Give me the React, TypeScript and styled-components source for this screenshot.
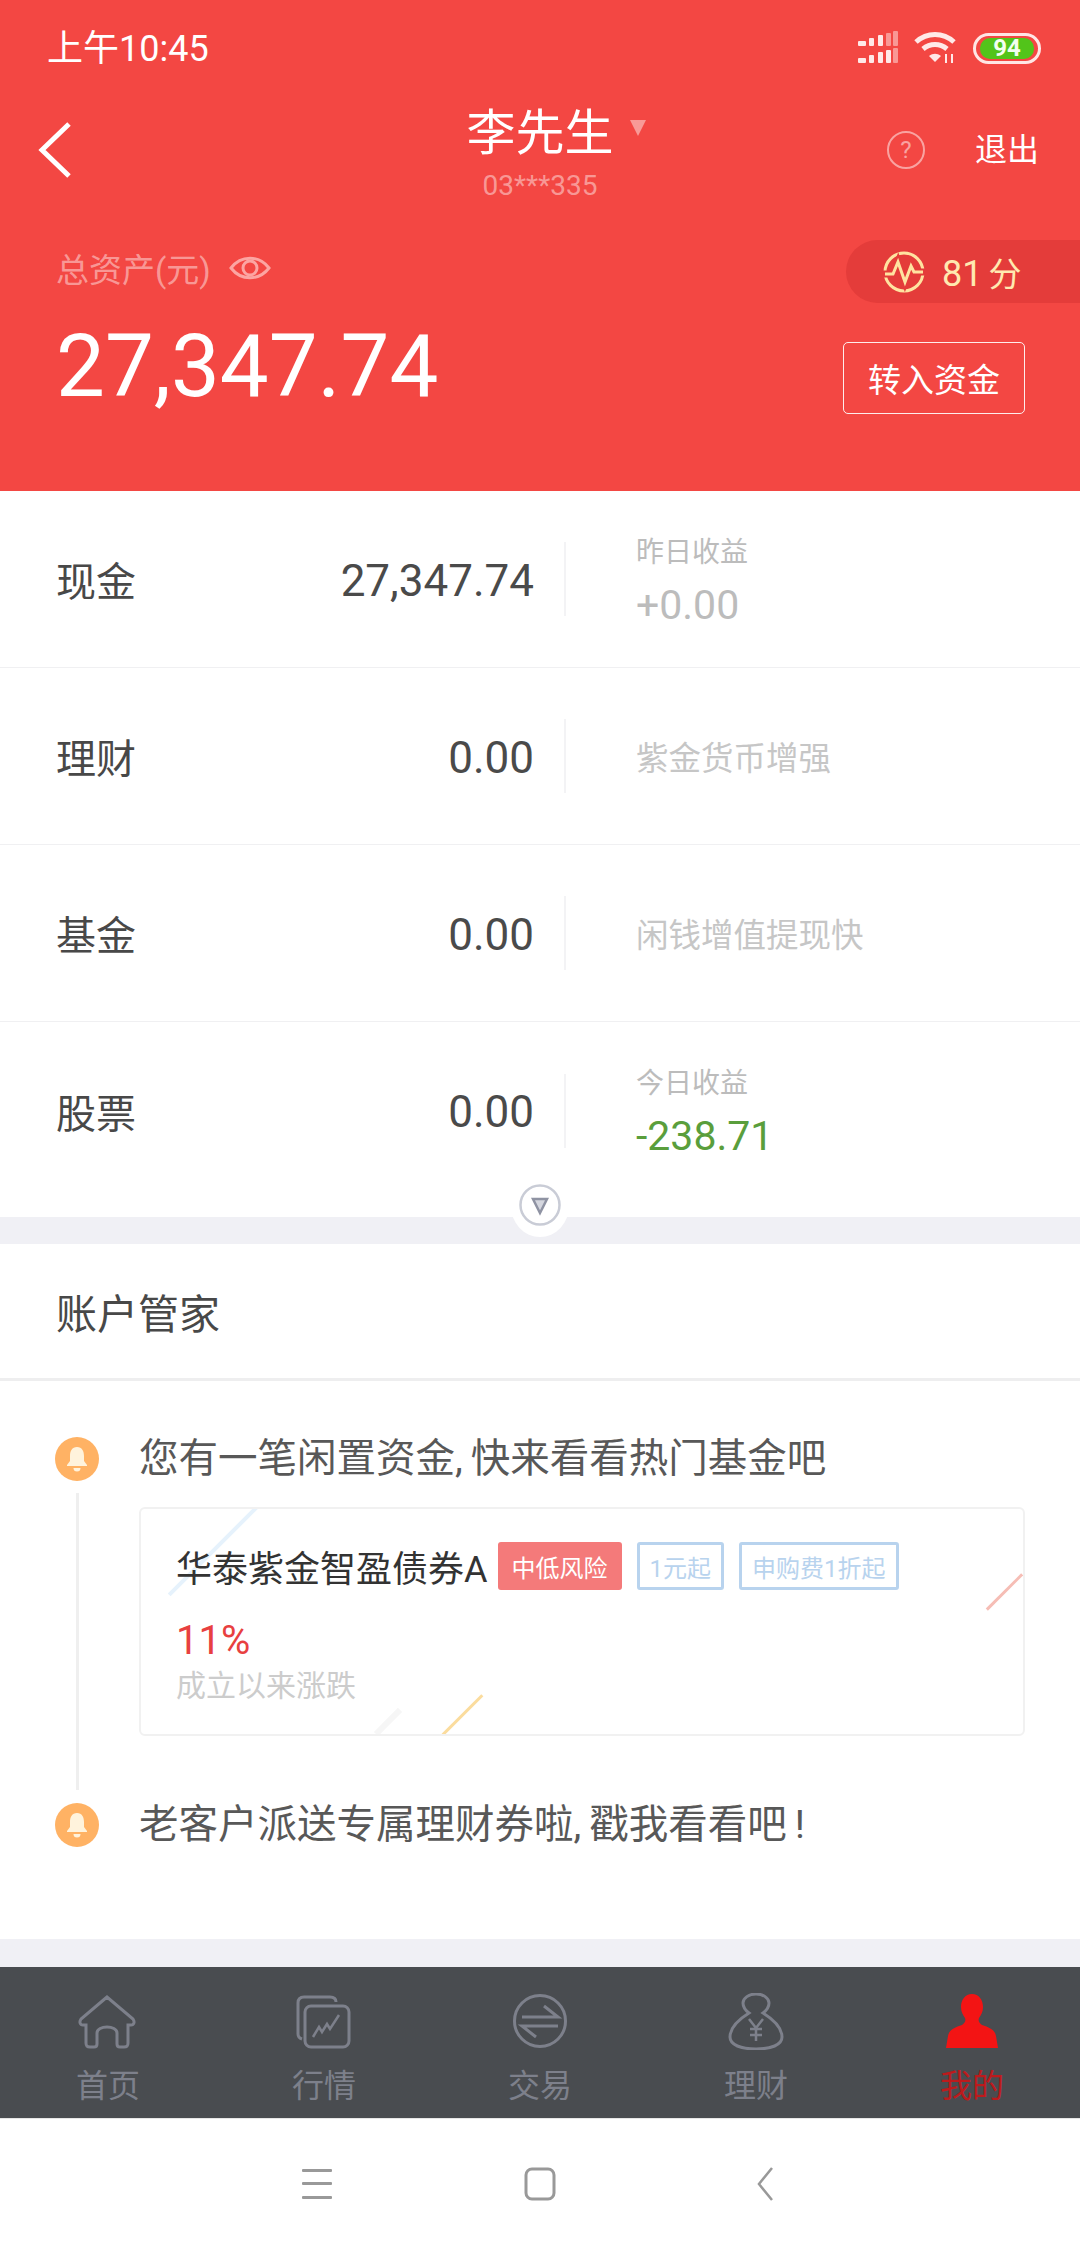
import React from 'react';
import styled, { createGlobalStyle } from 'styled-components';

const GlobalStyle = createGlobalStyle`
  html, body { margin: 0; padding: 0; background: #fff; }
  * { box-sizing: border-box; }
  body { font-family: Roboto, "Noto Sans CJK SC", sans-serif; }
`;

const Page = styled.div`
  width: 1080px;
  height: 2248px;
  display: flex;
  flex-direction: column;
  overflow: hidden;
  background: #fff;
`;

// Red header
const Header = styled.header`
  height: 491px;
  flex: none;
  background: #f34743;
  color: #fff;
`;

const StatusBar = styled.div`
  height: 98px;
  padding: 0 39px 0 47px;
  display: flex;
  align-items: center;
  justify-content: space-between;
`;

const StatusTime = styled.span`
  font-size: 36px;
  line-height: 98px;
`;

const StatusIcons = styled.div`
  display: flex;
  align-items: center;
  margin-top: -2px;
`;

const Battery = styled.div`
  width: 68px;
  height: 31px;
  margin-left: 15px;
  padding: 2px;
  border: 3px solid #ffe6e5;
  border-radius: 16px;
  display: flex;
`;

const BatteryFill = styled.div`
  flex: 1;
  margin: 0 2px;
  border-radius: 10px;
  background: #52c41a;
  font-size: 24px;
  line-height: 21px;
  font-weight: 700;
  text-align: center;
  color: #f2fff0;
`;

const TitleRow = styled.div`
  height: 104px;
  padding: 0 41px 0 37px;
  display: grid;
  grid-template-columns: 1fr auto 1fr;
  align-items: center;
`;

const NameBlock = styled.div`
  display: flex;
  flex-direction: column;
  align-items: center;
  position: relative;
  left: 2px;
  top: 5px;
`;

const Name = styled.div`
  font-size: 49px;
  line-height: 60px;
`;

const Caret = styled.span`
  position: absolute;
  left: 164px;
  top: 16px;
  width: 0;
  height: 0;
  border-left: 8px solid transparent;
  border-right: 8px solid transparent;
  border-top: 16px solid rgba(255, 255, 255, 0.45);
`;

const SubName = styled.div`
  margin-top: 2px;
  font-size: 28px;
  line-height: 40px;
  color: rgba(255, 255, 255, 0.45);
`;

const TitleActions = styled.div`
  display: flex;
  align-items: center;
  justify-content: flex-end;
  gap: 50px;
`;

const HelpCircle = styled.span`
  width: 38px;
  height: 38px;
  border: 2px solid rgba(255, 255, 255, 0.5);
  border-radius: 50%;
  display: flex;
  align-items: center;
  justify-content: center;
  font-size: 24px;
  color: rgba(255, 255, 255, 0.5);
`;

const Logout = styled.span`
  font-size: 32px;
  line-height: 44px;
`;

const AssetSection = styled.div`
  padding: 38px 0 0 56px;
  display: flex;
  justify-content: space-between;
`;

const AssetLabelRow = styled.div`
  height: 63px;
  padding-bottom: 8px;
  display: flex;
  align-items: center;
  gap: 18px;
  font-size: 33px;
  color: rgba(255, 255, 255, 0.45);
`;

const AssetAmount = styled.div`
  margin-top: 13px;
  font-size: 87px;
  line-height: 100px;
`;

const AssetSide = styled.div`
  display: flex;
  flex-direction: column;
  align-items: flex-end;
`;

const ScorePill = styled.div`
  width: 234px;
  height: 63px;
  padding-left: 36px;
  border-radius: 32px 0 0 32px;
  background: #e43c3a;
  display: flex;
  align-items: center;
  gap: 16px;
  font-size: 36px;
  color: #ffe9b0;
`;

const ScoreUnit = styled.span`
  margin-left: 6px;
  font-size: 33px;
`;

const TransferButton = styled.div`
  width: 182px;
  height: 72px;
  margin: 39px 55px 0 0;
  border: 1.5px solid rgba(255, 255, 255, 0.9);
  border-radius: 5px;
  display: flex;
  align-items: center;
  justify-content: center;
  font-size: 33px;
`;

// Holdings table
const HoldingRow = styled.div<{ $last?: boolean }>`
  height: ${p => (p.$last ? 195 : 177)}px;
  padding: 0 0 ${p => (p.$last ? 18 : 0)}px 56px;
  flex: none;
  display: flex;
  align-items: center;
  border-bottom: ${p => (p.$last ? 'none' : '1px solid #f0f0f2')};
`;

const HoldingLabel = styled.span`
  font-size: 40px;
  color: #484848;
`;

const HoldingValue = styled.span`
  margin-left: auto;
  width: 340px;
  padding-top: 3px;
  text-align: right;
  font-size: 44px;
  color: #4a4a4a;
`;

const RowDivider = styled.span`
  width: 2px;
  height: 74px;
  margin: 0 70px 0 30px;
  background: #f3f3f5;
`;

const RowAside = styled.div`
  width: 444px;
  padding-top: 6px;
  display: flex;
  flex-direction: column;
`;

const AsideCaption = styled.span`
  font-size: 28px;
  line-height: 40px;
  color: #bcbcbc;
`;

const AsideFigure = styled.span<{ $tone?: string }>`
  margin-top: 5px;
  font-size: 41px;
  line-height: 54px;
  color: ${p => p.$tone || '#bcbcbc'};
`;

const AsideHint = styled.span`
  margin-top: -7px;
  font-size: 32.500px;
  color: #c6c6c6;
`;

const Band = styled.div<{ $h: number }>`
  height: ${p => p.$h}px;
  flex: none;
  background: #f0f0f5;
  position: relative;
`;

const ExpandHandle = styled.div`
  position: absolute;
  left: 511px;
  top: -42px;
  width: 58px;
  height: 62px;
  padding-bottom: 2px;
  border-radius: 50%;
  background: #fff;
  display: flex;
  align-items: center;
  justify-content: center;
`;

// Account steward
const SectionTitle = styled.div`
  height: 137px;
  flex: none;
  padding-left: 56px;
  display: flex;
  align-items: center;
  border-bottom: 3px solid #eeeeef;
  font-size: 41px;
  color: #484848;
`;

const Timeline = styled.div`
  flex: 1;
  padding: 56px 55px 0 55px;
`;

const TimelineItem = styled.div`
  display: grid;
  grid-template-columns: 44px 1fr;
  column-gap: 40px;
`;

const Rail = styled.div`
  display: flex;
  flex-direction: column;
  align-items: center;
`;

const Connector = styled.span`
  flex: 1;
  width: 3px;
  margin: 12px 0 13px;
  background: #efefef;
`;

const AlertText = styled.div`
  font-size: 39.500px;
  line-height: 44px;
  color: #585858;
  white-space: nowrap;
`;

const Pause = styled.span<{ $before?: boolean }>`
  margin: ${p => (p.$before ? '0 0 0 8px' : '0 8px 0 0')};
`;

const FundCard = styled.div`
  height: 229px;
  margin: 26px 0 67px;
  padding: 33px 0 0 35px;
  border: 2px solid #f1f1f1;
  border-radius: 6px;
  position: relative;
  overflow: hidden;
`;

const Streak = styled.span<{ $x: number; $y: number; $len: number; $color: string; $w?: number }>`
  position: absolute;
  left: ${p => p.$x}px;
  top: ${p => p.$y}px;
  width: ${p => p.$w || 3}px;
  height: ${p => p.$len}px;
  background: ${p => p.$color};
  transform: rotate(45deg);
`;

const FundHead = styled.div`
  position: relative;
  height: 48px;
  display: flex;
  align-items: center;
`;

const FundName = styled.span`
  font-size: 36px;
  color: #333;
  margin-right: 10px;
`;

const Tag = styled.span<{ $solid?: boolean }>`
  height: 48px;
  padding: 0 ${p => (p.$solid ? 11 : 10)}px;
  margin-right: 15px;
  border-radius: 3px;
  border: 3px solid ${p => (p.$solid ? '#f47a7a' : '#b8d3ee')};
  background: ${p => (p.$solid ? '#f47a7a' : 'transparent')};
  color: ${p => (p.$solid ? '#fff' : '#b8d3ee')};
  font-size: 24px;
  display: flex;
  align-items: center;
`;

const FundRate = styled.div`
  position: relative;
  margin-top: 29px;
  font-size: 40px;
  line-height: 44px;
  color: #e84040;
`;

const FundNote = styled.div`
  position: relative;
  margin-top: 3px;
  font-size: 30px;
  line-height: 40px;
  color: #ccc;
`;

// Bottom tabs
const TabBar = styled.nav`
  height: 151px;
  flex: none;
  display: grid;
  grid-template-columns: repeat(5, 216px);
  background: #494c50;
`;

const Tab = styled.div<{ $active?: boolean }>`
  padding-top: 26px;
  display: flex;
  flex-direction: column;
  align-items: center;
  font-size: 32px;
  line-height: 40px;
  color: ${p => (p.$active ? '#bd1a1c' : '#7d808b')};
`;

const TabLabel = styled.span`
  margin-top: 16px;
`;

const SystemNav = styled.div`
  height: 130px;
  flex: none;
  display: grid;
  grid-template-columns: repeat(3, 226px);
  justify-content: center;
  align-items: center;
  justify-items: center;
  border-top: 1px solid #e6e6e6;
  background: #fff;
`;

const ink = '#7d808b';

const BellIcon = () => (
  <svg width="44" height="44" viewBox="0 0 44 44" style={{ flex: 'none' }}>
    <circle cx="22" cy="22" r="22" fill="#ffb264" />
    <path d="M22 10c-5 0-7 4-7 9v5l-3 4v1h20v-1l-3-4v-5c0-5-2-9-7-9z" fill="#fff3dc" />
    <path d="M18.500 31a3.500 3.500 0 0 0 7 0z" fill="#fff3dc" />
  </svg>
);

export default function App() {
  return (
    <Page>
      <GlobalStyle />
      <Header>
        <StatusBar>
          <StatusTime>上午10:45</StatusTime>
          <StatusIcons>
            <svg width="44" height="34" viewBox="0 0 44 34" fill="#ffe9e8">
              <rect x="0" y="10" width="8" height="5" rx="1" />
              <rect x="11" y="7" width="5" height="8" rx="1" />
              <rect x="20" y="4" width="5" height="11" rx="1" />
              <rect x="28" y="2" width="5" height="13" rx="1" opacity=".5" />
              <rect x="35" y="0" width="5" height="15" rx="1" opacity=".5" />
              <rect x="0" y="27" width="8" height="5" rx="1" />
              <rect x="11" y="24" width="5" height="8" rx="1" />
              <rect x="20" y="21" width="5" height="11" rx="1" />
              <rect x="28" y="19" width="5" height="13" rx="1" />
              <rect x="35" y="17" width="5" height="15" rx="1" opacity=".5" />
            </svg>
            <svg width="44" height="34" viewBox="0 0 44 34" fill="none" style={{ marginLeft: 12 }}>
              <g stroke="#ffe9e8" strokeWidth="5">
                <path d="M2 11C13 1 29 1 40 11" />
                <path d="M9 18c7-6 17-6 24 0" />
              </g>
              <path d="M15 25c4-3 8-3 12 0l-6 6z" fill="#ffe9e8" />
              <path d="M32 23v9M38 23v9" stroke="#ffe9e8" strokeWidth="2" />
            </svg>
            <Battery>
              <BatteryFill>94</BatteryFill>
            </Battery>
          </StatusIcons>
        </StatusBar>

        <TitleRow>
          <svg width="36" height="58" viewBox="0 0 36 58" fill="none">
            <path d="M32 3L5 29l27 26" stroke="#fff" strokeWidth="5" />
          </svg>
          <NameBlock>
            <Name>李先生</Name>
            <Caret />
            <SubName>03***335</SubName>
          </NameBlock>
          <TitleActions>
            <HelpCircle>?</HelpCircle>
            <Logout>退出</Logout>
          </TitleActions>
        </TitleRow>

        <AssetSection>
          <div>
            <AssetLabelRow>
              <span>总资产(元)</span>
              <svg width="42" height="30" viewBox="0 0 42 30" fill="none" stroke="#fca5a2" strokeWidth="3">
                <path d="M2 15C12 2 30 2 40 15 30 28 12 28 2 15z" />
                <circle cx="21" cy="15" r="7" />
              </svg>
            </AssetLabelRow>
            <AssetAmount>27,347.74</AssetAmount>
          </div>
          <AssetSide>
            <ScorePill>
              <svg width="44" height="44" viewBox="0 0 44 44" fill="none" strokeWidth="3">
                <circle cx="22" cy="22" r="19" stroke="#ffe3a0" />
                <path d="M1 24h10l5-12 7 20 6-16 3 6h11" stroke="#e43c3a" strokeWidth="7" />
                <path d="M3 24h8l5-12 7 20 6-16 3 6h9" stroke="#ffe3a0" />
              </svg>
              <span>
                81<ScoreUnit>分</ScoreUnit>
              </span>
            </ScorePill>
            <TransferButton>转入资金</TransferButton>
          </AssetSide>
        </AssetSection>
      </Header>

      <HoldingRow>
        <HoldingLabel>现金</HoldingLabel>
        <HoldingValue>27,347.74</HoldingValue>
        <RowDivider />
        <RowAside>
          <AsideCaption>昨日收益</AsideCaption>
          <AsideFigure>+0.00</AsideFigure>
        </RowAside>
      </HoldingRow>
      <HoldingRow>
        <HoldingLabel>理财</HoldingLabel>
        <HoldingValue>0.00</HoldingValue>
        <RowDivider />
        <RowAside>
          <AsideHint>紫金货币增强</AsideHint>
        </RowAside>
      </HoldingRow>
      <HoldingRow>
        <HoldingLabel>基金</HoldingLabel>
        <HoldingValue>0.00</HoldingValue>
        <RowDivider />
        <RowAside>
          <AsideHint>闲钱增值提现快</AsideHint>
        </RowAside>
      </HoldingRow>
      <HoldingRow $last>
        <HoldingLabel>股票</HoldingLabel>
        <HoldingValue>0.00</HoldingValue>
        <RowDivider />
        <RowAside>
          <AsideCaption>今日收益</AsideCaption>
          <AsideFigure $tone="#5a9e3c">-238.71</AsideFigure>
        </RowAside>
      </HoldingRow>

      <Band $h={27}>
        <ExpandHandle>
          <svg width="42" height="42" viewBox="0 0 42 42" fill="none">
            <circle cx="21" cy="21" r="19.500" stroke="#c9ccd6" strokeWidth="2.500" />
            <path d="M14 15h14l-7 14z" stroke="#8f93a3" strokeWidth="2.500" fill="#d5d7df" />
          </svg>
        </ExpandHandle>
      </Band>

      <SectionTitle>账户管家</SectionTitle>

      <Timeline>
        <TimelineItem>
          <Rail>
            <BellIcon />
            <Connector />
          </Rail>
          <div>
            <AlertText>
              您有一笔闲置资金<Pause>,</Pause>快来看看热门基金吧
            </AlertText>
            <FundCard>
              <Streak $x={70} $y={-20} $len={124} $color="#e6f2fc" $w={4} />
              <Streak $x={862} $y={58} $len={50} $color="#f6bdb5" />
              <Streak $x={320} $y={178} $len={56} $color="#fbdc9d" />
              <Streak $x={244} $y={196} $len={34} $color="#f6f6f6" $w={6} />
              <FundHead>
                <FundName>华泰紫金智盈债券A</FundName>
                <Tag $solid>中低风险</Tag>
                <Tag>1元起</Tag>
                <Tag>申购费1折起</Tag>
              </FundHead>
              <FundRate>11%</FundRate>
              <FundNote>成立以来涨跌</FundNote>
            </FundCard>
          </div>
        </TimelineItem>
        <TimelineItem>
          <BellIcon />
          <AlertText>
            老客户派送专属理财券啦<Pause>,</Pause>戳我看看吧<Pause $before>!</Pause>
          </AlertText>
        </TimelineItem>
      </Timeline>

      <Band $h={28} />

      <TabBar>
        <Tab>
          <svg width="60" height="57" viewBox="0 0 60 57" fill="none" stroke={ink} strokeWidth="3">
            <path d="M29 4L3 26c-2 3-1 6 2 6h3v18c0 3 1 4 4 4h4c2 0 3-1 3-3V40c0-8 20-8 20 0v11c0 2 1 3 3 3h4c3 0 4-1 4-4V32h3c3 0 4-3 2-6z" />
          </svg>
          <TabLabel>首页</TabLabel>
        </Tab>
        <Tab>
          <svg width="60" height="57" viewBox="0 0 60 57" fill="none" stroke={ink} strokeWidth="3">
            <path d="M8 46c-3-1-4-2-4-5V10c0-4 2-6 6-6h26c4 0 6 2 6 5" />
            <rect x="11" y="13" width="44" height="41" rx="6" />
            <path d="M19 44l6-10 3 5 5-8 3 5 9-14" strokeWidth="2.500" />
          </svg>
          <TabLabel>行情</TabLabel>
        </Tab>
        <Tab>
          <svg width="60" height="57" viewBox="0 0 60 57" fill="none" stroke={ink} strokeWidth="3">
            <circle cx="30" cy="28" r="25.500" />
            <path d="M12 24h36L34 13" />
            <path d="M48 33H12l14 11" />
          </svg>
          <TabLabel>交易</TabLabel>
        </Tab>
        <Tab>
          <svg width="60" height="57" viewBox="0 0 60 57" fill="none" stroke={ink} strokeWidth="3">
            <path d="M23 20c-4-3-6-6-6-10 0-5 6-9 13-9s13 4 13 9c0 4-2 7-6 10 8 5 19 14 19 24 0 8-11 12-26 12S4 52 4 44c0-10 11-19 19-24z" />
            <path d="M23 26l7 9 7-9M30 35v13M24 36h12M24 42h12" strokeWidth="2.500" />
          </svg>
          <TabLabel>理财</TabLabel>
        </Tab>
        <Tab $active>
          <svg width="60" height="57" viewBox="0 0 60 57">
            <path
              d="M30 1c7 0 11 6 11 13 0 5-2 8-4 11-1 3 0 5 3 7 7 2 13 5 14 11l2 12H4l2-12c1-6 7-9 14-11 3-2 4-4 3-7-2-3-4-6-4-11 0-7 4-13 11-13z"
              fill="#f31414"
            />
          </svg>
          <TabLabel>我的</TabLabel>
        </Tab>
      </TabBar>

      <SystemNav>
        <svg width="40" height="34" viewBox="0 0 40 34" fill="#999">
          <rect x="8" y="2" width="30" height="3" rx="1" />
          <rect x="8" y="15" width="30" height="3" rx="1" />
          <rect x="8" y="29" width="30" height="3" rx="1" />
        </svg>
        <svg width="34" height="34" viewBox="0 0 34 34" fill="none">
          <rect x="3" y="2" width="28" height="30" rx="6" stroke="#999" strokeWidth="3" />
        </svg>
        <svg width="24" height="36" viewBox="0 0 24 36" fill="none">
          <path d="M18 2L5 18l13 16" stroke="#999" strokeWidth="2.500" />
        </svg>
      </SystemNav>
    </Page>
  );
}
